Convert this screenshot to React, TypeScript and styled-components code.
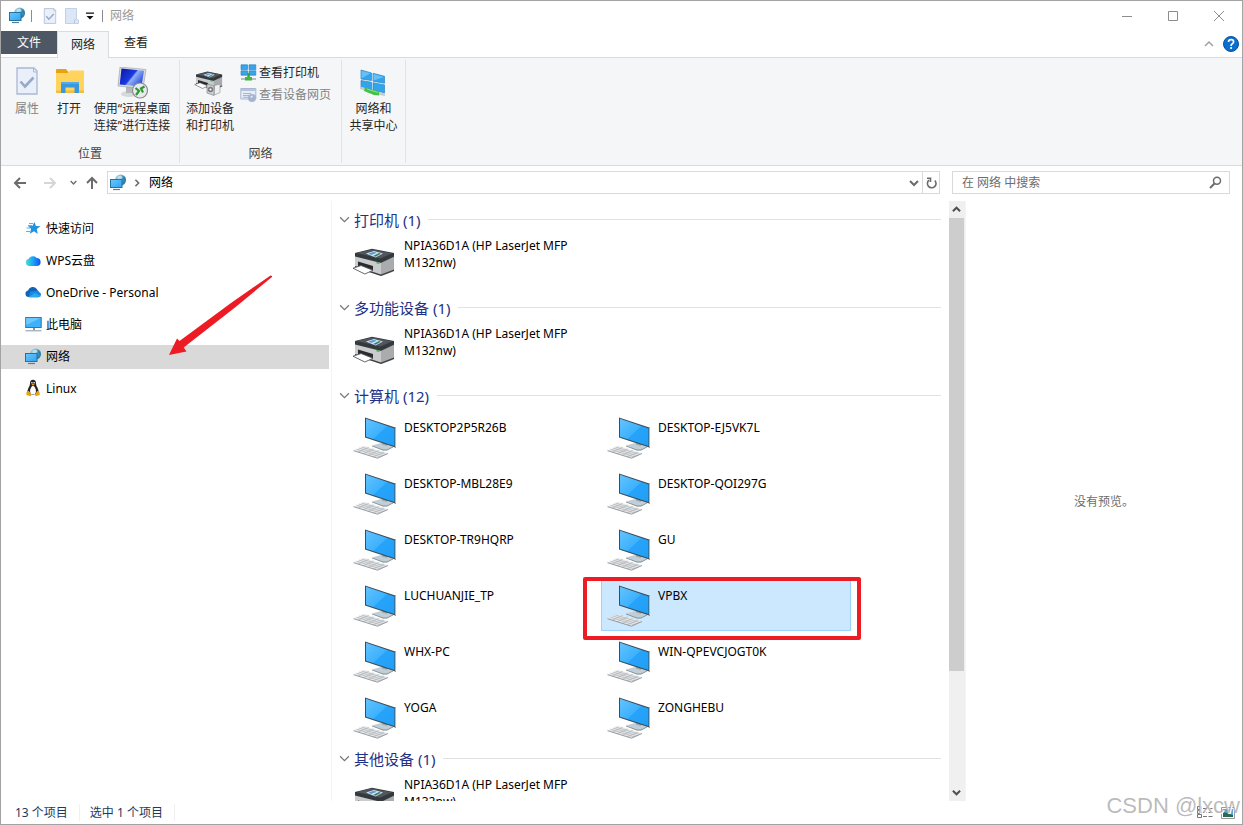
import React from "react";
import styled, { createGlobalStyle } from "styled-components";

const GlobalStyle = createGlobalStyle`
  * { box-sizing: border-box; }
  body {
    margin: 0;
    background: #fff;
    color: #000;
    font-family: "Noto Sans", "Noto Sans CJK SC", sans-serif;
    font-size: 12px;
    line-height: 17px;
  }
  button, input {
    margin: 0;
    padding: 0;
    border: 0;
    background: none;
    color: inherit;
    font: inherit;
  }
  a { color: inherit; text-decoration: none; }
  ul { margin: 0; padding: 0; list-style: none; }
  h2 { margin: 0; font-weight: 400; }
  svg { display: block; flex: none; }
`;

const Window = styled.div`
  display: flex;
  flex-direction: column;
  height: 100vh;
  min-height: 400px;
  overflow: hidden;
  border: 1px solid #a3a3a3;
`;

/* ---------- title bar ---------- */

const TitleBar = styled.header`
  display: flex;
  align-items: center;
  height: 29px;
  flex: none;
`;

const QuickTools = styled.div`
  display: flex;
  flex: 1;
  align-items: center;
  padding-left: 8px;
`;

const Separator = styled.span`
  width: 1px;
  height: 12px;
  margin: 0 7px 0 5px;
  background: #8c8c8c;
`;

const QuickButton = styled.button`
  display: flex;
  align-items: center;
  justify-content: center;
  width: 22px;
  height: 22px;
`;

const QuickMenuButton = styled(QuickButton)`
  width: 14px;
`;

const WindowTitle = styled.span`
  color: #999;
`;

const CaptionButton = styled.button`
  display: flex;
  align-items: center;
  justify-content: center;
  width: 46px;
  height: 28px;
`;

/* ---------- ribbon ---------- */

const TabRow = styled.nav`
  display: flex;
  flex: none;
  align-items: flex-end;
  height: 28px;
  border-bottom: 1px solid #dadbdc;
`;

const Tab = styled.button<{ $kind?: "file" | "active" }>`
  width: ${(p) => (p.$kind === "file" ? 56 : p.$kind === "active" ? 52 : 54)}px;
  height: ${(p) => (p.$kind === "active" ? 27 : 23)}px;
  margin-bottom: ${(p) => (p.$kind === "active" ? -1 : 3)}px;
  padding-bottom: ${(p) => (p.$kind === "active" ? 2 : 0)}px;
  color: ${(p) => (p.$kind === "file" ? "#fff" : "#222")};
  background: ${(p) =>
    p.$kind === "file" ? "#4d5864" : p.$kind === "active" ? "#f5f6f7" : "none"};
  border: ${(p) => (p.$kind === "active" ? "1px solid #dadbdc" : "0")};
  border-bottom: 0;
`;

const TabTools = styled.div`
  display: flex;
  gap: 9px;
  align-items: center;
  height: 27px;
  margin-left: auto;
  padding-right: 3px;
`;

const Ribbon = styled.section`
  display: flex;
  flex: none;
  height: 108px;
  padding: 2px 0;
  background: #f5f6f7;
  border-bottom: 1px solid #dadbdc;
`;

const RibbonGroup = styled.div`
  display: flex;
  flex-direction: column;
  padding: 7px 5px 0;
  border-right: 1px solid #e2e3e4;
`;

const RibbonItems = styled.div`
  display: flex;
  flex: 1;
  align-items: flex-start;
`;

const GroupLabel = styled.div`
  height: 18px;
  color: #444;
  text-align: center;
`;

const LargeButton = styled.button<{ $width: number; $muted?: boolean }>`
  display: flex;
  flex-direction: column;
  gap: 1px;
  align-items: center;
  width: ${(p) => p.$width}px;
  color: ${(p) => (p.$muted ? "#838383" : "#262626")};
  white-space: nowrap;
`;

const SmallButtons = styled.div`
  display: flex;
  flex-direction: column;
  margin-top: -6px;
  padding: 0 5px;
`;

const SmallButton = styled.button<{ $muted?: boolean }>`
  display: flex;
  gap: 2px;
  align-items: center;
  height: 22px;
  color: ${(p) => (p.$muted ? "#838383" : "#262626")};
`;

/* ---------- address row ---------- */

const AddressRow = styled.div`
  display: flex;
  flex: none;
  align-items: center;
  height: 35px;
  padding: 0 12px 2px 9px;
`;

const NavButton = styled.button<{ $width: number }>`
  display: flex;
  align-items: center;
  justify-content: center;
  width: ${(p) => p.$width}px;
  height: 22px;
`;

const AddressBox = styled.div`
  display: flex;
  flex: 1;
  align-items: center;
  height: 23px;
  padding-left: 2px;
  border: 1px solid #d9d9d9;
`;

const PathChevron = styled.span`
  display: flex;
  justify-content: center;
  width: 22px;
  padding-right: 2px;
`;

const RefreshButton = styled(NavButton)`
  height: 21px;
  border-left: 1px solid #d9d9d9;
`;

const PathLink = styled.a`
  flex: 1;
`;

const SearchBox = styled.label`
  display: flex;
  flex: 0 0 278px;
  align-items: center;
  height: 23px;
  margin-left: 12px;
  padding: 0 7px 0 9px;
  border: 1px solid #d9d9d9;
`;

const SearchInput = styled.input`
  flex: 1;
  min-width: 0;
  outline: 0;
  &::placeholder { color: #6d6d6d; opacity: 1; }
`;

/* ---------- body ---------- */

const Body = styled.main`
  display: flex;
  flex: 1;
  min-height: 0;
`;

const Sidebar = styled.nav`
  position: relative;
  flex: 0 0 328px;
  padding-top: 16px;
`;

const SideList = styled.ul`
  display: flex;
  flex-direction: column;
  gap: 8px;
`;

const SideLink = styled.a<{ $active?: boolean }>`
  display: flex;
  gap: 5px;
  align-items: center;
  height: 24px;
  padding: 0 0 2px 24px;
  background: ${(p) => (p.$active ? "#d9d9d9" : "none")};
`;

const SideIcon = styled.span`
  display: flex;
  justify-content: center;
  width: 16px;
`;

const ArrowMark = styled.svg`
  position: absolute;
  top: 72px;
  left: 166px;
  pointer-events: none;
`;

const Listing = styled.section`
  flex: 1;
  min-width: 0;
  margin-left: 2px;
  padding: 7px 8px 0 7px;
  overflow: hidden;
  border-left: 1px solid #f4f4f4;
`;

const GroupHeading = styled.h2`
  display: flex;
  gap: 4px;
  align-items: center;
  height: 24px;
  padding-bottom: 1px;
  color: #1e3287;
  font-size: 15px;
  line-height: 22px;
  &::after {
    content: "";
    flex: 1;
    height: 1px;
    margin-left: 4px;
    background: #e2e2e2;
  }
`;

const Tiles = styled.ul<{ $kind: Kind }>`
  display: grid;
  grid-template-columns: repeat(auto-fill, 250px);
  gap: 5px 4px;
  padding: ${(p) => (p.$kind === "pc" ? "4px 0 4px 8px" : "0 0 13px 8px")};
`;

const Tile = styled.li<{ $selected?: boolean }>`
  position: relative;
  display: flex;
  gap: 4px;
  height: 51px;
  padding: 0 4px;
  border: 1px solid ${(p) => (p.$selected ? "#99d1ff" : "transparent")};
  background: ${(p) => (p.$selected ? "#cce8ff" : "none")};
`;

const TileName = styled.span<{ $kind: Kind }>`
  padding-top: ${(p) => (p.$kind === "pc" ? 6 : 4)}px;
`;

const BoxMark = styled.span`
  position: absolute;
  top: -4px;
  right: -11px;
  bottom: -10px;
  left: -19px;
  border: 4px solid #ed1c24;
  border-radius: 2px;
`;

const ScrollBar = styled.div`
  display: flex;
  flex: 0 0 16px;
  flex-direction: column;
  background: #f0f0f0;
`;

const ScrollButton = styled.button`
  display: flex;
  align-items: center;
  justify-content: center;
  height: 17px;
  padding-right: 1px;
`;

const ScrollTrack = styled.div`
  flex: 1;
`;

const ScrollThumb = styled.div`
  width: 15px;
  height: 80%;
  background: #cdcdcd;
`;

const Preview = styled.aside`
  display: flex;
  flex: 0 0 277px;
  align-items: center;
  justify-content: center;
  border-left: 1px solid #f4f4f4;
  color: #6d6d6d;
`;

/* ---------- status bar ---------- */

const StatusBar = styled.footer`
  position: relative;
  display: flex;
  flex: none;
  align-items: center;
  height: 23px;
  padding: 0 7px 0 14px;
  color: #1e395b;
`;

const StatusText = styled.span`
  margin-right: 10px;
  padding-right: 11px;
  border-right: 1px solid #f0f0f0;
`;

const ViewButtons = styled.div`
  display: flex;
  gap: 8px;
  margin-left: auto;
`;

const Watermark = styled.span`
  position: absolute;
  right: 2px;
  bottom: 3px;
  color: rgba(165, 165, 165, 0.75);
  font-family: "Liberation Sans", sans-serif;
  font-size: 22px;
  line-height: 30px;
  text-shadow: 1px 1px 0 #fff;
  pointer-events: none;
`;

/* ---------- icons ---------- */

type ChevronProps = { d: "up" | "down" | "right"; color?: string; w?: number; stroke?: number };

const Chevron = ({ d, color = "#6b6b6b", w = 10, stroke = 2 }: ChevronProps) => (
  <svg width={w} height={w} viewBox="0 0 10 10" fill="none" stroke={color} strokeWidth={stroke}>
    <path d={d === "up" ? "M1 7l4-4 4 4" : d === "down" ? "M1 3l4 4 4-4" : "M3 1l4 4-4 4"} />
  </svg>
);

const NetworkIcon = () => (
  <svg width="17" height="17" viewBox="0 0 17 17">
    <defs>
      <linearGradient id="globe" x1="0" y1="0" x2="1" y2="1">
        <stop offset="0" stopColor="#b9dcea" />
        <stop offset="0.5" stopColor="#4f9fc4" />
        <stop offset="1" stopColor="#1c6590" />
      </linearGradient>
      <linearGradient id="netscreen" x1="0" y1="0" x2="1" y2="1">
        <stop offset="0" stopColor="#6cc6fb" />
        <stop offset="1" stopColor="#2ea4f2" />
      </linearGradient>
    </defs>
    <circle cx="10.6" cy="6" r="5.5" fill="url(#globe)" />
    <path d="M7.500 3q2-2 4-1l1 2-2 1-3 1z" fill="#d6edf4" opacity=".75" />
    <path d="M12.500 1.500q3 2 3 5l-2-1z" fill="#2b7da7" />
    <rect x="0.5" y="5.500" width="11.5" height="8" fill="url(#netscreen)" stroke="#24739f" />
    <path d="M3 15.500h7" stroke="#5b7d92" strokeWidth="1.2" />
  </svg>
);

const CheckPage = ({ w, h }: { w: number; h: number }) => (
  <svg width={w} height={h} viewBox="0 0 22 28" fill="none">
    <path d="M1 1h17l3 3v23H1z" fill="#e9f0fa" stroke="#a9b8d3" strokeWidth="1.3" />
    <path d="M17.5 1v4H21" stroke="#a9b8d3" />
    <path d="M4.5 14.5l4.5 5 8.5-9" stroke="#97a9ca" strokeWidth="2.6" />
  </svg>
);

const NewFolderIcon = () => (
  <svg width="14" height="16" viewBox="0 0 14 16">
    <path d="M.5.5h11v10.500l2 1v3.500H.5z" fill="#dbe6f6" stroke="#c3d1e8" />
    <path d="M11 11l-1.500 1v3.500" fill="none" stroke="#b7c6df" />
  </svg>
);

const FolderIcon = () => (
  <svg width="32" height="32" viewBox="0 0 32 32">
    <path d="M3 3q0-1 1-1h9l2.500 3v4H3z" fill="#e6a414" />
    <path d="M3 6h12l2-2.500h13q1 0 1 1V25H3z" fill="#ffd35c" />
    <path d="M3 23.500h28V26H3z" fill="#f2bd43" />
    <path d="M8 26V15h18v11h-4.500v-5.500h-9V26z" fill="#3a98dc" />
    <path d="M8 15h18v2H8z" fill="#52aae8" />
  </svg>
);

const RemoteIcon = () => (
  <svg width="32" height="32" viewBox="0 0 32 32">
    <defs>
      <linearGradient id="rdp" x1="0" y1="0" x2="1" y2="0.6">
        <stop offset="0" stopColor="#0a14a8" />
        <stop offset="0.55" stopColor="#1c3be0" />
        <stop offset="0.62" stopColor="#93b2f8" />
        <stop offset="1" stopColor="#2a4fe0" />
      </linearGradient>
    </defs>
    <ellipse cx="13" cy="27" rx="8" ry="3" fill="#d6d8da" />
    <path d="M10 20h7l1 6h-8z" fill="#b5b8bb" />
    <path d="M4 0l26 2.500-3 19L2 19z" fill="#d9dcdf" stroke="#9a9da0" strokeWidth=".6" />
    <path d="M5.500 1.500l22.500 2.200-2.500 15.800L3.700 17.500z" fill="url(#rdp)" />
    <circle cx="24" cy="23.500" r="7.500" fill="#e8eaec" stroke="#8b8e91" strokeWidth="1.2" />
    <path d="M19.500 21l3.500 3-3 4M28.500 19.500l-3.500 2 2 4" fill="none" stroke="#2f9836" strokeWidth="2.2" />
  </svg>
);

const PrinterShape = () => (
  <>
    <path d="M4 34l25 9 14-5-13 2z" fill="#b9b9b9" />
    <path d="M3 22l26 8v12.500L3 34z" fill="#c9cbcc" />
    <path d="M29 30l13-6.500v14L29 42.500z" fill="#a9abad" />
    <path d="M3 33l26 8.500 13-5v1.500L29 43 3 34.500z" fill="#3d4144" />
    <path d="M3 20l17-4.200 22 4.200v3.800L29 30 3 23.500z" fill="#34393d" />
    <path d="M4.500 20L20 16.500l20 3.700-11.500 5.300z" fill="#51575c" />
    <path d="M14 20.500l8-2.500 9 2.500-7.500 4z" fill="#d2e8f6" />
    <path d="M16.500 20.500l5.500-1.700 3 1-6 2.200z" fill="#5e9cd8" />
    <path d="M21 23l6-3 2 .7-5.500 3z" fill="#3e7c68" />
    <path d="M6 28.500l15 4.500v5L6 34z" fill="#282c2f" />
    <path d="M1 35.200l8-2.700 12 4.800-8.200 3.700z" fill="#fff" stroke="#54585b" strokeWidth=".9" />
    <path d="M24.500 29.500l3 .8" stroke="#37b34a" strokeWidth="1.3" />
  </>
);

const PrinterIcon = () => (
  <svg width="48" height="48" viewBox="0 0 48 48"><PrinterShape /></svg>
);

const AddPrinterIcon = () => (
  <svg width="32" height="32" viewBox="0 0 32 32">
    <g transform="translate(0 -6) scale(.67)"><PrinterShape /></g>
    <path d="M13 17l7 2v9.500L13 26z" fill="#ced1d3" stroke="#75797c" strokeWidth=".6" />
    <path d="M20.500 18.500l5.500-1.500v8.500l-5.500 2.500z" fill="#eeeff0" stroke="#8a8d8f" strokeWidth=".6" />
    <circle cx="16.500" cy="22.500" r="2.700" fill="#77797b" />
    <circle cx="16.500" cy="22.500" r="1.1" fill="#fff" />
  </svg>
);

const ViewPrintersIcon = () => (
  <svg width="17" height="17" viewBox="0 0 17 17">
    <path
      d="M1 .8h6.500v4.700H1zM9 .8h6.800v4.700H9zM1 6.800h6.500v4.400H1zM9 6.800h6.800v4.400H9z"
      fill="#35a5ee" stroke="#2678b5" strokeWidth=".6"
    />
    <path d="M7.300 9h2.500v4.500H7.300z" fill="#35a836" />
    <path d="M1 14h15v2H1z" fill="#b8bfc4" />
    <path d="M5 13h7v3.500H5z" fill="#3fb93f" />
  </svg>
);

const DevicePageIcon = () => (
  <svg width="17" height="17" viewBox="0 0 17 17">
    <path d="M.8 2.500h15v10.500H.8z" fill="#e7edf7" stroke="#a9b7d1" />
    <path d="M1 3h14.500v2H1z" fill="#b5c3dc" />
    <path d="M3 7.500h8M3 9.500h6M3 11.300h5" stroke="#a6b4cf" />
    <circle cx="12" cy="12" r="4" fill="#a4b4d0" />
    <path d="M10 11q2-2.500 3-1l-1 2z" fill="#dfe7f3" />
  </svg>
);

const SharingCenterIcon = () => (
  <svg width="32" height="32" viewBox="0 0 32 32">
    <path
      d="M3 3l10.500 3v7.500L3 12zM15 6.300l11.500 3v7L15 14.200zM3 13.500l10.500 1.700v7.300L3 20.500zM15 15.700l11.500 2.200v8L15 23z"
      fill="#31a4ee" stroke="#2d85c4" strokeWidth=".7"
    />
    <path d="M3.500 3.700L12.500 6.300 3.500 11.500zM15.500 7l10.500 3-10.500 3.500z" fill="#67bff6" />
    <path d="M2 19.500l5 1.200v3L2 22z" fill="#c6cbce" />
    <path d="M7 20.500l14 4v4l-5-.5-10-4z" fill="#43c048" />
    <path d="M9 22l11 3.500" stroke="#8be28b" />
    <path d="M21 25l6 1.500V29l-6-1z" fill="#c6cbce" />
  </svg>
);

const ComputerIcon = () => (
  <svg width="48" height="48" viewBox="0 0 48 48">
    <defs>
      <linearGradient id="screen" x1="0" y1="0" x2="1" y2="1">
        <stop offset="0" stopColor="#62c3ff" />
        <stop offset="0.5" stopColor="#3db1fd" />
        <stop offset="0.51" stopColor="#27a4fa" />
        <stop offset="1" stopColor="#1f9ff6" />
      </linearGradient>
    </defs>
    <path d="M20 32.500l9-2.500 12 4-6 3.500-4 .2z" fill="#c2ced5" />
    <path d="M20 33l11 4h4l6-3" fill="none" stroke="#78858c" strokeWidth=".8" />
    <path d="M30 28h5v5l-5-1.500z" fill="#9daab1" />
    <path d="M13 4.500l31 10.300v20L13 24.500z" fill="#3a4d59" />
    <path d="M14 5.700l28.500 9.700v17.500L14 23.700z" fill="url(#screen)" />
    <path d="M43 14.800l1 .4v19l-1 .3z" fill="#aebbc2" />
    <path d="M1.500 37.500L12 33l24 7.200L25.500 45z" fill="#e4e6e7" />
    <path
      d="M4.500 36.200l24 7.700M7 35l24 7.700M9.500 34l24 7.300M6.500 39l10.300-4.700M11.500 40.600l10.300-4.700M16.500 42.200l10.300-4.700M21.500 43.800l10.300-4.700"
      stroke="#b0b5b8" strokeWidth=".7"
    />
    <path d="M1.500 37.700l24 7.500L36 40.500" fill="none" stroke="#8c9296" strokeWidth=".9" />
  </svg>
);

const StarIcon = () => (
  <svg width="16" height="16" viewBox="0 0 16 16">
    <path d="M9.500 2l1.400 4 4.600.2-3.700 2.900.9 4.900-3.700-2.700-4.200 2.500 1.300-4.700-3-2.800 4.200-.3z" fill="#1f93e0" />
    <path d="M4 3.500h4M1.500 8h3.500M1 11.500h4M3 5.500h4" stroke="#5bb2ea" />
  </svg>
);

const WpsCloudIcon = () => (
  <svg width="16" height="16" viewBox="0 0 16 16">
    <defs>
      <linearGradient id="wps" x1="0" y1="0" x2="1" y2="0">
        <stop offset="0" stopColor="#41e0d0" />
        <stop offset="0.45" stopColor="#20a8f8" />
        <stop offset="1" stopColor="#0a55ee" />
      </linearGradient>
    </defs>
    <path d="M4.500 14a3.700 3.700 0 01-.7-7.300A4.500 4.500 0 0111.500 6a4 4 0 01.2 8z" fill="url(#wps)" />
  </svg>
);

const OneDriveIcon = () => (
  <svg width="17" height="16" viewBox="0 0 17 16">
    <path d="M3.500 13A3.300 3.300 0 013 6.500 5 5 0 0111.800 5l1.700 3z" fill="#0f63b8" />
    <path d="M5 7.500l7-1q1.500 0 2 1.400a2.700 2.700 0 01-.4 5.300H4z" fill="#1b87dc" />
    <path d="M3.500 13.200L10 8.800l5.700 3.300q-.8 1.100-2 1.100z" fill="#2ba6ef" />
  </svg>
);

const ThisPcIcon = () => (
  <svg width="17" height="16" viewBox="0 0 17 16">
    <rect x=".7" y="1.500" width="15.500" height="10" fill="#3fb1fa" stroke="#2b7cab" />
    <path d="M1.200 2h14L1.200 9z" fill="#6fc7fc" />
    <path d="M8 12h2v2H8z" fill="#7e98a7" />
    <path d="M.5 14.800h16" stroke="#8199a8" />
  </svg>
);

const LinuxIcon = () => (
  <svg width="16" height="18" viewBox="0 0 16 18">
    <path d="M8 .8q3 0 3 3.700 0 2 1.500 4.300 1.800 3 .5 6L8 16l-5-1.200q-1.300-3 .5-6Q5 6.500 5 4.500 5 .8 8 .8z" fill="#222" />
    <path d="M8 6.500q2 1 2.800 4 .6 3-.8 5H6q-1.400-2-.8-5 .8-3 2.800-4z" fill="#fff" />
    <circle cx="6.900" cy="3.700" r=".8" fill="#fff" />
    <circle cx="9.200" cy="3.700" r=".8" fill="#fff" />
    <path d="M6.300 5.200L8 4.500l1.800.7L8 6.500z" fill="#e8a412" />
    <path d="M1.500 13l2.300-1.200 2.700 4-1 1.400-4.200-1.200zM14.500 13l-2.300-1.200-2.200 4 .8 1.400 4-1.200z" fill="#e5a50f" />
  </svg>
);

const arrowPaths = {
  left: "M13 7H2M7 2L2 7l5 5",
  right: "M1 7h11M7 2l5 5-5 5",
  up: "M7 13V2M2 7l5-5 5 5",
};

const Arrow = ({ dir, color }: { dir: keyof typeof arrowPaths; color: string }) => (
  <svg width="14" height="14" viewBox="0 0 14 14" fill="none" stroke={color} strokeWidth="2">
    <path d={arrowPaths[dir]} />
  </svg>
);

/* ---------- data ---------- */

type Kind = "printer" | "pc";
type Group = { title: string; kind: Kind; items: string[] };

const printerName = "NPIA36D1A (HP LaserJet MFP M132nw)";

const groups: Group[] = [
  { title: "打印机 (1)", kind: "printer", items: [printerName] },
  { title: "多功能设备 (1)", kind: "printer", items: [printerName] },
  {
    title: "计算机 (12)",
    kind: "pc",
    items: [
      "DESKTOP2P5R26B", "DESKTOP-EJ5VK7L",
      "DESKTOP-MBL28E9", "DESKTOP-QOI297G",
      "DESKTOP-TR9HQRP", "GU",
      "LUCHUANJIE_TP", "VPBX",
      "WHX-PC", "WIN-QPEVCJOGT0K",
      "YOGA", "ZONGHEBU",
    ],
  },
  { title: "其他设备 (1)", kind: "printer", items: [printerName] },
];

const places = [
  { name: "快速访问", icon: <StarIcon /> },
  { name: "WPS云盘", icon: <WpsCloudIcon /> },
  { name: "OneDrive - Personal", icon: <OneDriveIcon /> },
  { name: "此电脑", icon: <ThisPcIcon /> },
  { name: "网络", icon: <NetworkIcon />, active: true },
  { name: "Linux", icon: <LinuxIcon /> },
];

export default function App() {
  return (
    <Window lang="zh-CN">
      <GlobalStyle />
      <TitleBar>
        <QuickTools>
          <NetworkIcon />
          <Separator />
          <QuickButton aria-label="属性"><CheckPage w={14} h={16} /></QuickButton>
          <QuickButton aria-label="新建文件夹"><NewFolderIcon /></QuickButton>
          <QuickMenuButton aria-label="自定义快速访问工具栏">
            <svg width="8" height="8" viewBox="0 0 8 8"><path d="M0 .5h8v1.200H0zM.5 4h7L4 7.500z" fill="#111" /></svg>
          </QuickMenuButton>
          <Separator />
          <WindowTitle>网络</WindowTitle>
        </QuickTools>
        <CaptionButton aria-label="最小化">
          <svg width="10" height="10" viewBox="0 0 10 10"><path d="M0 5.500h10" stroke="#8c8c8c" /></svg>
        </CaptionButton>
        <CaptionButton aria-label="最大化">
          <svg width="10" height="10" viewBox="0 0 10 10"><path d="M.5.5h9v9h-9z" fill="none" stroke="#8c8c8c" /></svg>
        </CaptionButton>
        <CaptionButton aria-label="关闭">
          <svg width="10" height="10" viewBox="0 0 10 10"><path d="M0 0l10 10M10 0L0 10" stroke="#8c8c8c" /></svg>
        </CaptionButton>
      </TitleBar>

      <TabRow>
        <Tab $kind="file">文件</Tab>
        <Tab $kind="active">网络</Tab>
        <Tab>查看</Tab>
        <TabTools>
          <button aria-label="最小化功能区"><Chevron d="up" color="#a0a0a0" stroke={1.5} /></button>
          <button aria-label="帮助">
            <svg width="16" height="16" viewBox="0 0 16 16">
              <circle cx="8" cy="8" r="7.500" fill="#0b6fd0" stroke="#0a4f9a" />
              <path d="M5.500 6q.1-2.300 2.600-2.300T10.600 6q0 1-1.300 1.800Q8.100 8.500 8.100 10" fill="none" stroke="#fff" strokeWidth="1.7" />
              <circle cx="8.100" cy="12" r="1.1" fill="#fff" />
            </svg>
          </button>
        </TabTools>
      </TabRow>

      <Ribbon>
        <RibbonGroup>
          <RibbonItems>
            <LargeButton $width={42} $muted>
              <svg width="32" height="32" viewBox="0 0 32 32"><g transform="translate(5 0)"><CheckPage w={22} h={28} /></g></svg>
              属性
            </LargeButton>
            <LargeButton $width={42}><FolderIcon />打开</LargeButton>
            <LargeButton $width={84}><RemoteIcon /><span>使用“远程桌面<br />连接”进行连接</span></LargeButton>
          </RibbonItems>
          <GroupLabel>位置</GroupLabel>
        </RibbonGroup>
        <RibbonGroup>
          <RibbonItems>
            <LargeButton $width={50}><AddPrinterIcon /><span>添加设备<br />和打印机</span></LargeButton>
            <SmallButtons>
              <SmallButton><ViewPrintersIcon />查看打印机</SmallButton>
              <SmallButton $muted><DevicePageIcon />查看设备网页</SmallButton>
            </SmallButtons>
          </RibbonItems>
          <GroupLabel>网络</GroupLabel>
        </RibbonGroup>
        <RibbonGroup>
          <RibbonItems>
            <LargeButton $width={53}><SharingCenterIcon /><span>网络和<br />共享中心</span></LargeButton>
          </RibbonItems>
        </RibbonGroup>
      </Ribbon>

      <AddressRow>
        <NavButton $width={20} aria-label="后退"><Arrow dir="left" color="#6b6b6b" /></NavButton>
        <NavButton $width={40} aria-label="前进"><Arrow dir="right" color="#d6d6d6" /></NavButton>
        <NavButton $width={7} aria-label="最近位置"><Chevron d="down" w={7} /></NavButton>
        <NavButton $width={30} aria-label="上移"><Arrow dir="up" color="#6b6b6b" /></NavButton>
        <AddressBox>
          <NetworkIcon />
          <PathChevron><Chevron d="right" w={8} /></PathChevron>
          <PathLink href="#network">网络</PathLink>
          <NavButton $width={17} aria-label="历史记录"><Chevron d="down" /></NavButton>
          <RefreshButton $width={17} aria-label="刷新">
            <svg width="11" height="12" viewBox="0 0 11 12" fill="none" stroke="#6b6b6b" strokeWidth="1.6">
              <path d="M8.800 3.500A4.300 4.300 0 11 3 3.200M1 1.300h3.500V5" />
            </svg>
          </RefreshButton>
        </AddressBox>
        <SearchBox>
          <SearchInput type="text" placeholder="在 网络 中搜索" aria-label="在 网络 中搜索" />
          <svg width="13" height="13" viewBox="0 0 13 13" fill="none" stroke="#6b6b6b">
            <circle cx="8" cy="4.800" r="3.500" strokeWidth="1.5" />
            <path d="M5.500 7.500L1 12" strokeWidth="2" />
          </svg>
        </SearchBox>
      </AddressRow>

      <Body>
        <Sidebar>
          <SideList>
            {places.map((p) => (
              <li key={p.name}>
                <SideLink href="#place" $active={p.active}><SideIcon>{p.icon}</SideIcon>{p.name}</SideLink>
              </li>
            ))}
          </SideList>
          <ArrowMark width="106" height="84" viewBox="0 0 106 84">
            <path d="M105 3l-1.500-.5L64 30 12.500 68 10 65.500 2 82l17.500-3.500-2.800-4L68 34.500 105 4z" fill="#ed1c24" />
          </ArrowMark>
        </Sidebar>
        <Listing>
          {groups.map((g) => (
            <section key={g.title}>
              <GroupHeading><Chevron d="down" color="#777" w={11} stroke={1.1} />{g.title}</GroupHeading>
              <Tiles $kind={g.kind}>
                {g.items.map((name) => (
                  <Tile key={name} $selected={name === "VPBX"}>
                    {g.kind === "pc" ? <ComputerIcon /> : <PrinterIcon />}
                    <TileName $kind={g.kind}>{name}</TileName>
                    {name === "VPBX" && <BoxMark />}
                  </Tile>
                ))}
              </Tiles>
            </section>
          ))}
        </Listing>
        <ScrollBar>
          <ScrollButton aria-label="向上滚动"><Chevron d="up" color="#505050" w={9} stroke={2.2} /></ScrollButton>
          <ScrollTrack><ScrollThumb /></ScrollTrack>
          <ScrollButton aria-label="向下滚动"><Chevron d="down" color="#505050" w={9} stroke={2.2} /></ScrollButton>
        </ScrollBar>
        <Preview>没有预览。</Preview>
      </Body>

      <StatusBar>
        <StatusText>13 个项目</StatusText>
        <StatusText>选中 1 个项目</StatusText>
        <ViewButtons>
          <button aria-label="详细信息">
            <svg width="16" height="13" viewBox="0 0 16 13" fill="none" stroke="#777">
              <path d="M.5.5h4v3h-4zM.5 4.500h4v3h-4zM.5 8.500h4v3h-4z" />
              <path d="M6 2.500h4M11.500 2.500h4M6 6.500h4M11.500 6.500h4M6 10.500h4M11.500 10.500h4" />
            </svg>
          </button>
          <button aria-label="大缩略图">
            <svg width="14" height="12" viewBox="0 0 14 12">
              <path d="M.5.5h13v11H.5z" fill="#fff" stroke="#999" />
              <path d="M2 2h10v8H2z" fill="#59a5ea" />
              <path d="M2 5l4 1 6 2v2H2z" fill="#2c6b4c" />
            </svg>
          </button>
        </ViewButtons>
        <Watermark>CSDN @lxcw</Watermark>
      </StatusBar>
    </Window>
  );
}
